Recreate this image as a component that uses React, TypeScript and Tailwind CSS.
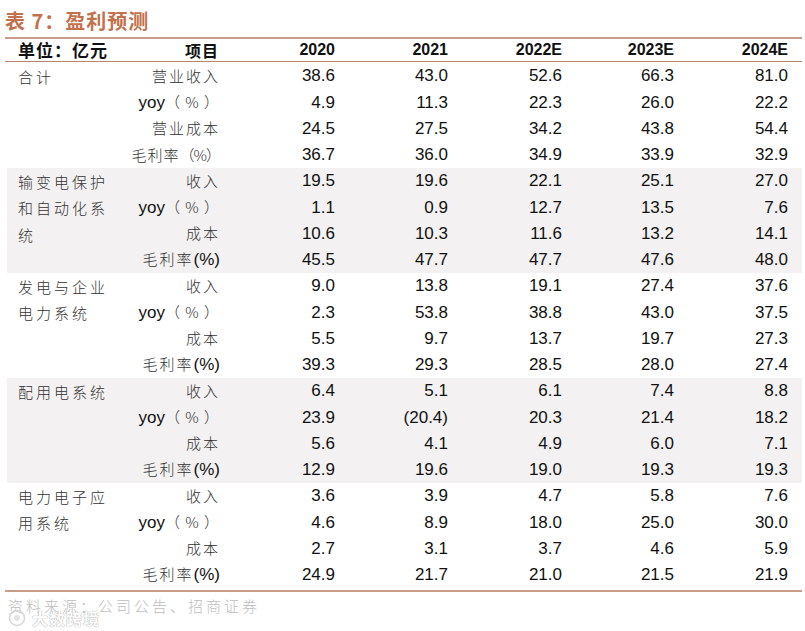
import React from "react";

const cjk = "font-['Noto_Sans_CJK_SC',sans-serif]";
const arial = "font-['Liberation_Sans',Arial,sans-serif]";

type Row = { item: React.ReactNode; vals: string[] };
type Group = { label: string[]; rows: Row[]; shaded: boolean };

const CN = ({ t }: { t: string }) => (
  <span className={`${cjk} font-light text-[15px] tracking-[2px] text-[#333] whitespace-nowrap`}>{t}</span>
);
const Yoy = () => (
  <span className="flex items-baseline whitespace-nowrap">
    <span className={`${arial} text-[17px] text-[#111]`}>yoy</span>
    <span className={`${cjk} font-light text-[15px] tracking-[1px] text-[#333]`}>（ % ）</span>
  </span>
);
const Margin = () => (
  <span className="flex items-baseline whitespace-nowrap">
    <span className={`${cjk} font-light text-[15px] tracking-[2px] text-[#333]`}>毛利率</span>
    <span className={`${arial} text-[17px] text-[#111]`}>(%)</span>
  </span>
);
const Margin2 = () => (
  <span className="flex items-baseline whitespace-nowrap">
    <span className={`${cjk} font-light text-[15px] tracking-[1px] text-[#333]`}>毛利率</span>
    <span className={`${cjk} font-light text-[15px] tracking-[-1px] text-[#333]`}>（%）</span>
  </span>
);

const groups: Group[] = [
  {
    label: ["合计"],
    shaded: false,
    rows: [
      { item: <CN t="营业收入" />, vals: ["38.6", "43.0", "52.6", "66.3", "81.0"] },
      { item: <Yoy />, vals: ["4.9", "11.3", "22.3", "26.0", "22.2"] },
      { item: <CN t="营业成本" />, vals: ["24.5", "27.5", "34.2", "43.8", "54.4"] },
      { item: <Margin2 />, vals: ["36.7", "36.0", "34.9", "33.9", "32.9"] },
    ],
  },
  {
    label: ["输变电保护", "和自动化系", "统"],
    shaded: true,
    rows: [
      { item: <CN t="收入" />, vals: ["19.5", "19.6", "22.1", "25.1", "27.0"] },
      { item: <Yoy />, vals: ["1.1", "0.9", "12.7", "13.5", "7.6"] },
      { item: <CN t="成本" />, vals: ["10.6", "10.3", "11.6", "13.2", "14.1"] },
      { item: <Margin />, vals: ["45.5", "47.7", "47.7", "47.6", "48.0"] },
    ],
  },
  {
    label: ["发电与企业", "电力系统"],
    shaded: false,
    rows: [
      { item: <CN t="收入" />, vals: ["9.0", "13.8", "19.1", "27.4", "37.6"] },
      { item: <Yoy />, vals: ["2.3", "53.8", "38.8", "43.0", "37.5"] },
      { item: <CN t="成本" />, vals: ["5.5", "9.7", "13.7", "19.7", "27.3"] },
      { item: <Margin />, vals: ["39.3", "29.3", "28.5", "28.0", "27.4"] },
    ],
  },
  {
    label: ["配用电系统"],
    shaded: true,
    rows: [
      { item: <CN t="收入" />, vals: ["6.4", "5.1", "6.1", "7.4", "8.8"] },
      { item: <Yoy />, vals: ["23.9", "(20.4)", "20.3", "21.4", "18.2"] },
      { item: <CN t="成本" />, vals: ["5.6", "4.1", "4.9", "6.0", "7.1"] },
      { item: <Margin />, vals: ["12.9", "19.6", "19.0", "19.3", "19.3"] },
    ],
  },
  {
    label: ["电力电子应", "用系统"],
    shaded: false,
    rows: [
      { item: <CN t="收入" />, vals: ["3.6", "3.9", "4.7", "5.8", "7.6"] },
      { item: <Yoy />, vals: ["4.6", "8.9", "18.0", "25.0", "30.0"] },
      { item: <CN t="成本" />, vals: ["2.7", "3.1", "3.7", "4.6", "5.9"] },
      { item: <Margin />, vals: ["24.9", "21.7", "21.0", "21.5", "21.9"] },
    ],
  },
];

const cols = "grid grid-cols-[80px_115px_113px_114px_112px_114px]";

export default function App() {
  return (
    <div className="w-[805px] h-[631px] bg-white overflow-hidden relative">
      <div className="pl-[5px] pr-[3px] pt-[7px]">
        <div className={`${cjk} font-bold text-[20px] leading-[28px] text-[#c2714c] tracking-[1px]`}>
          表 7：盈利预测
        </div>
        <div className="mt-[2px] h-[2px] bg-[#c79c89]" />
        {/* header */}
        <div className="flex h-[23px] items-center border-b border-[#b58670]">
          <div className={`w-[135px] pl-[13px] ${cjk} font-bold text-[17px] tracking-[1px] text-[#111] whitespace-nowrap`}>
            单位：亿元
          </div>
          <div className={`${cols} pr-[12px]`}>
            <div className={`text-right ${cjk} font-bold text-[16px] tracking-[1px] text-[#111] pr-[1px]`}>项目</div>
            {["2020", "2021", "2022E", "2023E", "2024E"].map((y) => (
              <div key={y} className={`text-right ${arial} font-bold text-[16px] text-[#111]`}>
                {y}
              </div>
            ))}
          </div>
        </div>
        {/* body */}
        <div className="pt-[1px]">
          {groups.map((g, gi) => (
            <div key={gi} className={`flex h-[105px] ml-[2px] ${g.shaded ? "bg-[#f3f1f1]" : ""}`}>
              <div className={`w-[133px] shrink-0 pl-[11px] pt-[1px] ${cjk} font-light text-[15px] tracking-[3px] leading-[26.25px] text-[#333] whitespace-nowrap`}>
                {g.label.map((l, i) => (
                  <div key={i}>{l}</div>
                ))}
              </div>
              <div className="flex flex-col flex-1">
                {g.rows.map((r, ri) => (
                  <div key={ri} className={`${cols} h-[26.25px] items-center pr-[12px]`}>
                    <div className="flex justify-end">{r.item}</div>
                    {r.vals.map((v, vi) => (
                      <div key={vi} className={`text-right ${arial} text-[17px] text-[#111]`}>
                        {v}
                      </div>
                    ))}
                  </div>
                ))}
              </div>
            </div>
          ))}
        </div>
        <div className="mt-[2px] h-[2px] bg-[#c79c89]" />
        <div className={`pl-[3px] pt-[3px] ${cjk} font-light text-[15px] tracking-[3px] text-[#bdbdbd]`}>
          资料来源：公司公告、招商证券
        </div>
      </div>
      {/* watermark */}
      <div className="absolute left-[8px] top-[606px] flex items-center gap-[6px]">
        <svg width="18" height="18" viewBox="0 0 18 18">
          <circle cx="9" cy="9" r="7.5" fill="none" stroke="#d6d6d6" strokeWidth="1.5" />
          <circle cx="9" cy="9" r="3" fill="#e4e4e4" />
        </svg>
        <span
          className={`${cjk} font-bold text-[16px] tracking-[1px] text-white [text-shadow:0_0_1px_#aaa,0_0_1px_#aaa]`}
        >
          大数跨境
        </span>
      </div>
    </div>
  );
}
